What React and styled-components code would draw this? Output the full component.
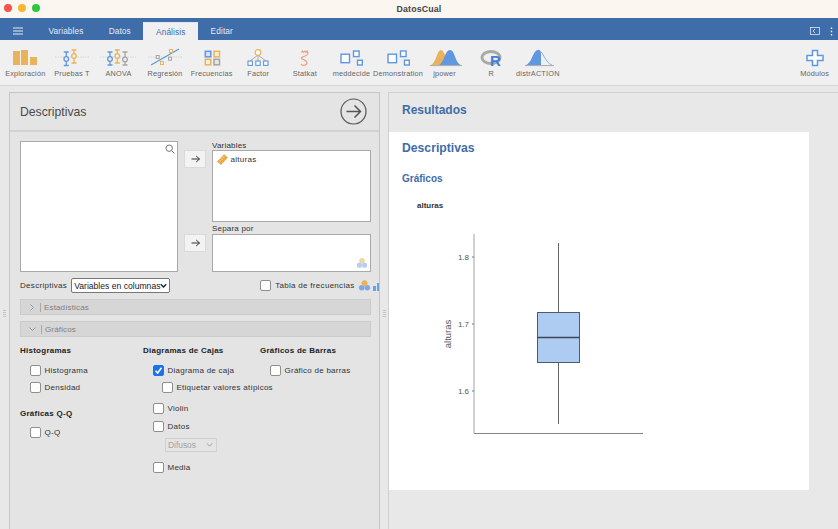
import React from 'react';
import styled, { createGlobalStyle } from 'styled-components';

const Global = createGlobalStyle`
    html, body { margin: 0; padding: 0; height: 100%; overflow: hidden; }
    body { font-family: "Liberation Sans", Arial, sans-serif; background: #e8e8e8; }
    #root { height: 100%; }
`;

const BLUE = '#5f97e0';
const ORANGE = '#e9b35c';
const GREY = '#a5a5a5';

const Page = styled.div`
    width: 838px;
    height: 529px;
    display: flex;
    flex-direction: column;
    overflow: hidden;
`;

const TitleBar = styled.div`
    height: 18px;
    flex: none;
    background: #fbf6f0;
    position: relative;
    display: flex;
    align-items: center;
    justify-content: center;
    font-size: 8.8px;
    font-weight: bold;
    letter-spacing: 0.15px;
    color: #444;
`;

const Lights = styled.div`
    position: absolute;
    left: 4px;
    top: 4px;
    display: flex;
    gap: 6px;
`;

const Light = styled.span`
    width: 8px;
    height: 8px;
    border-radius: 50%;
    background: ${props => props.$color};
`;

const NavBar = styled.div`
    height: 22px;
    flex: none;
    background: #3e6da9;
    display: flex;
    align-items: flex-end;
`;

const Burger = styled.div`
    width: 36px;
    height: 18px;
    display: flex;
    align-items: center;
    justify-content: center;
`;

const Tab = styled.div`
    height: 18px;
    padding: 0 12.6px;
    display: flex;
    align-items: center;
    font-size: 8.3px;
    letter-spacing: 0.1px;
    color: ${props => (props.$active ? '#3e6da9' : '#e4ebf5')};
    background: ${props => (props.$active ? '#f0f0f0' : 'transparent')};
    border-top: ${props => (props.$active ? '1px solid #dfe6ef' : '0')};
    box-sizing: border-box;
`;

const NavRight = styled.div`
    margin-left: auto;
    height: 18px;
    display: flex;
    align-items: center;
    gap: 10px;
    padding-right: 5px;
`;

const Ribbon = styled.div`
    height: 46px;
    flex: none;
    box-sizing: border-box;
    padding-left: 2px;
    background: #f0f0f0;
    border-bottom: 1px solid #d8d8d8;
    display: flex;
`;

const RibbonItem = styled.div`
    width: 46.6px;
    flex: none;
    display: flex;
    flex-direction: column;
    align-items: center;
    padding-top: 7px;
    margin-left: ${props => (props.$end ? 'auto' : '0')};
`;

const RibbonLabel = styled.div`
    margin-top: 1px;
    font-size: 7.3px;
    letter-spacing: 0.2px;
    line-height: 9px;
    color: #666;
    white-space: nowrap;
`;

const Main = styled.div`
    flex: 1;
    display: flex;
    padding-top: 6px;
    min-height: 0;
`;

const Gutter = styled.div`
    width: ${props => props.$width}px;
    flex: none;
    display: flex;
    flex-direction: column;
    align-items: center;
    justify-content: center;
    gap: 1px;
    padding-top: 6px;
    box-sizing: border-box;
`;

const GripDot = styled.span`
    width: 3px;
    height: 1px;
    background: #c4c4c4;
`;

const OptionsPanel = styled.div`
    width: 371px;
    flex: none;
    box-sizing: border-box;
    border: 1px solid #c6c6c6;
    border-bottom: 0;
    background: #e4e4e4;
    overflow: hidden;
`;

const PanelHeader = styled.div`
    height: 39px;
    box-sizing: border-box;
    padding: 0 12px 0 10px;
    border-bottom: 2px solid #d2d2d2;
    display: flex;
    align-items: center;
    justify-content: space-between;
`;

const PanelTitle = styled.div`
    font-size: 12.2px;
    color: #4a4a4a;
`;

const PanelBody = styled.div`
    padding: 9px 0 0 10px;
    width: 351px;
`;

const Supplier = styled.div`
    display: grid;
    grid-template-columns: 158px 22px 159px;
    grid-template-rows: 81px 48px;
    column-gap: 6px;
    row-gap: 2px;
`;

const VarSource = styled.div`
    grid-row: 1 / span 2;
    box-sizing: border-box;
    background: #fff;
    border: 1px solid #a9a9a9;
    position: relative;
`;

const SearchSpot = styled.div`
    position: absolute;
    top: 2px;
    right: 2px;
    line-height: 0;
`;

const MoveButton = styled.div`
    width: 22px;
    height: 18px;
    margin-top: ${props => props.$top}px;
    box-sizing: border-box;
    background: #f3f3f3;
    border: 1px solid #dadada;
    display: flex;
    align-items: center;
    justify-content: center;
`;

const TargetWrap = styled.div`
    display: flex;
    flex-direction: column;
`;

const TargetLabel = styled.div`
    font-size: 8px;
    letter-spacing: 0.2px;
    line-height: ${props => props.$line}px;
    height: ${props => props.$line}px;
    color: #333;
`;

const TargetBox = styled.div`
    flex: 1;
    box-sizing: border-box;
    background: #fff;
    border: 1px solid #a9a9a9;
    padding: 2px 3px;
    position: relative;
`;

const VarRow = styled.div`
    display: flex;
    align-items: center;
    gap: 1.5px;
    font-size: 8px;
    letter-spacing: 0.3px;
    color: #333;
`;

const TargetBadge = styled.div`
    position: absolute;
    right: 2px;
    bottom: 2px;
    line-height: 0;
`;

const OptionRow = styled.div`
    display: flex;
    align-items: center;
    height: 17px;
    margin-top: 5px;
    font-size: 8px;
    letter-spacing: 0.3px;
    color: #333;
    white-space: nowrap;
`;

const SelectShell = styled.div`
    position: relative;
    flex: none;
    line-height: 0;
    margin: ${props => props.$margin};
`;

const SelectChevron = styled.span`
    position: absolute;
    right: ${props => props.$right}px;
    top: 50%;
    transform: translateY(-50%);
    pointer-events: none;
`;

const NativeSelect = styled.select`
    appearance: none;
    font-family: "Liberation Sans", Arial, sans-serif;
    font-size: 8.6px;
    height: 15px;
    width: 99px;
    padding: 0 0 0 2px;
    background: #fff;
    color: #222;
    border: 1px solid #777;
    border-radius: 2px;
`;

const FreqGroup = styled.div`
    display: flex;
    align-items: center;
    gap: 4px;
    margin-left: 90px;
    flex: none;
`;

const FreqIcons = styled.div`
    display: flex;
    align-items: center;
    gap: 2px;
    margin-left: -1px;
`;

const Check = styled.div`
    width: 11px;
    height: 11px;
    flex: none;
    box-sizing: border-box;
    border-radius: 2px;
    background: ${props => (props.$on ? '#1a73e8' : '#fff')};
    border: 1px solid ${props => (props.$on ? '#1a73e8' : '#8f8f8f')};
    display: flex;
    align-items: center;
    justify-content: center;
`;

const Fold = styled.div`
    height: 16px;
    margin-top: ${props => props.$top}px;
    box-sizing: border-box;
    background: #d6d6d6;
    border: 1px solid #cbcbcb;
    display: flex;
    align-items: center;
    padding-left: 8px;
    font-size: 8px;
    letter-spacing: 0.15px;
    color: #808080;
`;

const FoldBar = styled.span`
    width: 1px;
    height: 9px;
    background: #a8a8a8;
    margin: 0 3px 0 5px;
`;

const OptionsGrid = styled.div`
    margin-top: 9px;
    display: grid;
    grid-template-columns: 123px 117px 1fr;
`;

const OptionColumn = styled.div`
    display: flex;
    flex-direction: column;
    align-items: flex-start;
`;

const GroupTitle = styled.div`
    font-size: 8px;
    font-weight: bold;
    letter-spacing: 0.25px;
    line-height: 10px;
    margin-top: ${props => props.$top || 0}px;
    margin-bottom: ${props => props.$bottom}px;
    color: #222;
    white-space: nowrap;
`;

const CheckRow = styled.div`
    display: flex;
    align-items: center;
    gap: 3.5px;
    height: 11px;
    margin-left: ${props => props.$indent}px;
    margin-top: ${props => props.$top || 0}px;
    font-size: 8px;
    letter-spacing: 0.25px;
    color: #333;
    white-space: nowrap;
`;

const MutedSelect = styled.select`
    appearance: none;
    font-family: "Liberation Sans", Arial, sans-serif;
    font-size: 8.4px;
    width: 52px;
    height: 14px;
    padding: 0 0 0 2px;
    background: #e4e4e4;
    color: #a3a3a3;
    border: 1px solid #cfcfcf;
    border-radius: 1px;
    opacity: 1;
`;

const ResultsPane = styled.div`
    flex: 1;
    min-width: 0;
    border-left: 1px solid #cfcfcf;
    border-top: 1px solid #cfcfcf;
    display: flex;
    flex-direction: column;
    align-items: flex-start;
`;

const ResultsHeader = styled.div`
    height: 39px;
    flex: none;
    box-sizing: border-box;
    padding: 0 0 6px 13px;
    display: flex;
    align-items: center;
    font-size: 12px;
    font-weight: bold;
    color: #3e6da9;
`;

const Sheet = styled.div`
    width: 420px;
    height: 358px;
    flex: none;
    box-sizing: border-box;
    background: #fff;
    padding: 9px 0 0 13px;
`;

const ResultTitle = styled.div`
    font-size: 12.2px;
    font-weight: bold;
    line-height: 14px;
    color: #3e6da9;
`;

const ResultSub = styled.div`
    margin-top: 18px;
    font-size: 10px;
    font-weight: bold;
    line-height: 12px;
    color: #3e6da9;
`;

const PlotTitle = styled.div`
    margin: 16px 0 0 15px;
    font-size: 8px;
    font-weight: bold;
    line-height: 10px;
    color: #333;
`;

const PlotSvg = styled.svg`
    display: block;
    margin: 14px 0 0 33px;
`;

function Whisker({ x, top, bottom, dot, color }) {
    return (
        <g stroke={color} fill="none" strokeWidth="1.3">
            <path d={`M${x - 2.5} ${top}h5M${x - 2.5} ${bottom}h5M${x} ${top}V${bottom}`} />
            <circle cx={x} cy={dot} r="2.3" fill="#f0f0f0" />
        </g>
    );
}

function Dashed({ from = 6, to = 40 }) {
    return <path d={`M${from} 10H${to}`} stroke="#cfcfcf" strokeWidth="0.8" strokeDasharray="1.5 1" />;
}

function Sq({ x, y, s, color, w = 1.4 }) {
    return <rect x={x} y={y} width={s} height={s} fill="#fff" stroke={color} strokeWidth={w} />;
}

const ribbonIcons = {
    exploracion: (
        <g fill={ORANGE}>
            <rect x="11" y="4" width="7" height="14" />
            <rect x="19" y="3" width="7" height="15" />
            <rect x="28" y="10" width="7" height="8" />
        </g>
    ),
    pruebas: (
        <g>
            <Dashed />
            <Whisker x={17.3} top={5} bottom={18.5} dot={12} color={BLUE} />
            <Whisker x={25} top={3} bottom={16} dot={9} color={ORANGE} />
        </g>
    ),
    anova: (
        <g>
            <Dashed from={5} to={41} />
            <Whisker x={15} top={5} bottom={18} dot={12} color={BLUE} />
            <Whisker x={22.3} top={3} bottom={16} dot={9} color={ORANGE} />
            <Whisker x={30} top={5} bottom={18} dot={12.5} color={GREY} />
        </g>
    ),
    regresion: (
        <g>
            <Dashed from={6} to={40} />
            <path d="M9 18L37 2" stroke={BLUE} strokeWidth="1.2" />
            <rect x="14.2" y="8.5" width="3" height="3" fill="#f0f0f0" stroke={GREY} />
            <rect x="27.5" y="2.5" width="3" height="3" fill="#f0f0f0" stroke={ORANGE} />
            <rect x="26.5" y="10.2" width="3" height="3" fill="#f0f0f0" stroke={GREY} />
            <rect x="18.5" y="14.5" width="3" height="3" fill="#f0f0f0" stroke={ORANGE} />
        </g>
    ),
    frecuencias: (
        <g>
            <rect x="16.3" y="4.3" width="5.5" height="5.5" fill="#d6e4f7" stroke={BLUE} strokeWidth="1.5" />
            <rect x="25" y="4.3" width="5.5" height="5.5" fill="#fbeed8" stroke={ORANGE} strokeWidth="1.5" />
            <rect x="16.3" y="12.3" width="5.5" height="5.5" fill="#fbeed8" stroke={ORANGE} strokeWidth="1.5" />
            <rect x="25" y="12.3" width="5.5" height="5.5" fill="#e6e6e6" stroke={GREY} strokeWidth="1.5" />
        </g>
    ),
    factor: (
        <g>
            <path d="M23 8L15 14M23 8V14M23 8L31 14" stroke="#9a9a9a" strokeWidth="0.8" />
            <circle cx="23" cy="5.5" r="2.8" fill="#fff" stroke={ORANGE} strokeWidth="1.2" />
            <Sq x={13} y={14} s={4.4} color={BLUE} w={1.1} />
            <Sq x={20.8} y={14} s={4.4} color={BLUE} w={1.1} />
            <Sq x={28.6} y={14} s={4.4} color={BLUE} w={1.1} />
        </g>
    ),
    statkat: (
        <path
            d="M19.5 5.5l1-1.5 1 1.5 1.5-1.5 1 1.5 1-1.5 1 2.5c-.5 2.5-5 2.5-6.5 4.2-1.3 1.6 5.5 2 5.5 5 0 3-5 3.4-6 1.3"
            fill="none"
            stroke="#ee9a7f"
            strokeWidth="1.1"
        />
    ),
    squares: (
        <g>
            <Sq x={13} y={7.2} s={8.5} color={BLUE} />
            <Sq x={25.5} y={4} s={5.6} color={BLUE} />
            <Sq x={29.5} y={13.2} s={4.8} color={BLUE} />
        </g>
    ),
    jpower: (
        <g>
            <path d="M9 18C14 16 15 3 19 3S24 15 29 18Z" fill={ORANGE} />
            <path d="M17 18C22 16 23 3 28 3S33 16 39 18Z" fill={BLUE} />
            <path d="M8 18.6H40" stroke="#a9a9a9" strokeWidth="1" />
        </g>
    ),
    r: (
        <g>
            <ellipse cx="23" cy="10.5" rx="9" ry="6" fill="none" stroke="#a9a9a9" strokeWidth="2.8" />
            <text x="27.5" y="19" textAnchor="middle" fontFamily="Liberation Sans" fontWeight="bold" fontSize="15" fill="#3f7fdd">R</text>
        </g>
    ),
    distr: (
        <g>
            <path d="M11 18C17 16 18 3 23 3C24.5 3 25.5 4 26 6V18Z" fill={BLUE} />
            <path d="M23 3C28 3 30 16 37 18" fill="none" stroke={BLUE} strokeWidth="0.7" />
            <path d="M10 18.6H39" stroke="#a9a9a9" strokeWidth="1" />
        </g>
    ),
    modulos: (
        <path
            d="M20.5 3.5h5v5h5.5v5h-5.5v5h-5v-5H15v-5h5.5z"
            fill="#fff"
            stroke={BLUE}
            strokeWidth="1.5"
        />
    ),
};

const ribbon = [
    ['Exploración', 'exploracion'],
    ['Pruebas T', 'pruebas'],
    ['ANOVA', 'anova'],
    ['Regresión', 'regresion'],
    ['Frecuencias', 'frecuencias'],
    ['Factor', 'factor'],
    ['Statkat', 'statkat'],
    ['meddecide', 'squares'],
    ['Demonstration', 'squares'],
    ['jpower', 'jpower'],
    ['R', 'r'],
    ['distrACTION', 'distr'],
];

function RibbonButton({ label, icon, end }) {
    return (
        <RibbonItem $end={end}>
            <svg width="46" height="21" viewBox="0 0 46 21">{ribbonIcons[icon]}</svg>
            <RibbonLabel>{label}</RibbonLabel>
        </RibbonItem>
    );
}

function Grip({ width }) {
    return (
        <Gutter $width={width}>
            <GripDot />
            <GripDot />
            <GripDot />
            <GripDot />
        </Gutter>
    );
}

function Arrow() {
    return (
        <svg width="9" height="8" viewBox="0 0 9 8">
            <path d="M0.5 4H8.5M5.2 1L8.5 4L5.2 7" fill="none" stroke="#333" strokeWidth="1" />
        </svg>
    );
}

function Chevron({ color, width }) {
    return (
        <svg width="7" height="5" viewBox="0 0 7 5" style={{ display: 'block' }}>
            <path d="M0.8 0.8L3.5 3.6L6.2 0.8" fill="none" stroke={color} strokeWidth={width} />
        </svg>
    );
}

function Nominal({ size = 14, faded }) {
    return (
        <svg width={size} height={size} viewBox="0 0 14 14" opacity={faded ? 0.55 : 1}>
            <circle cx="4" cy="9.5" r="3" fill="#7fa8e6" />
            <circle cx="10" cy="9.5" r="3" fill="#7fa8e6" />
            <circle cx="7" cy="4.5" r="3.2" fill="#e9b35c" />
        </svg>
    );
}

function Option({ label, on, indent, top }) {
    return (
        <CheckRow $indent={indent} $top={top}>
            <Check $on={on}>
                {on && (
                    <svg width="9" height="9" viewBox="0 0 9 9">
                        <path d="M1.5 4.8L3.6 7L7.5 1.8" fill="none" stroke="#fff" strokeWidth="1.6" />
                    </svg>
                )}
            </Check>
            {label}
        </CheckRow>
    );
}

export default function App() {
    return (
        <Page>
            <Global />
            <TitleBar>
                <Lights>
                    <Light $color="#f5544d" />
                    <Light $color="#f7b52e" />
                    <Light $color="#2ec840" />
                </Lights>
                DatosCual
            </TitleBar>
            <NavBar>
                <Burger>
                    <svg width="10" height="8" viewBox="0 0 10 8">
                        <path d="M0 1H10M0 4H10M0 7H10" stroke="#e8eef7" strokeWidth="1" />
                    </svg>
                </Burger>
                <Tab>Variables</Tab>
                <Tab>Datos</Tab>
                <Tab $active>Análisis</Tab>
                <Tab>Editar</Tab>
                <NavRight>
                    <svg width="10" height="8" viewBox="0 0 10 8">
                        <rect x="0.5" y="0.5" width="9" height="7" fill="none" stroke="#dbe4f0" strokeWidth="0.8" />
                        <path d="M5 2L3 4L5 6" fill="none" stroke="#e8eef7" strokeWidth="0.8" />
                    </svg>
                    <svg width="3" height="9" viewBox="0 0 3 9">
                        <path d="M1.5 0.5v1.5M1.5 3.7v1.5M1.5 7v1.5" stroke="#f2f5fa" strokeWidth="1.4" />
                    </svg>
                </NavRight>
            </NavBar>
            <Ribbon>
                {ribbon.map(([label, icon]) => (
                    <RibbonButton key={label} label={label} icon={icon} />
                ))}
                <RibbonButton label="Módulos" icon="modulos" end />
            </Ribbon>
            <Main>
                <Grip width={9} />
                <OptionsPanel>
                    <PanelHeader>
                        <PanelTitle>Descriptivas</PanelTitle>
                        <svg width="27" height="27" viewBox="0 0 27 27">
                            <circle cx="13.5" cy="13.5" r="12.5" fill="none" stroke="#555" strokeWidth="1.2" />
                            <path d="M6.5 13.5H20M14.5 7.5L20.5 13.5L14.5 19.5" fill="none" stroke="#555" strokeWidth="1.5" />
                        </svg>
                    </PanelHeader>
                    <PanelBody>
                        <Supplier>
                            <VarSource>
                                <SearchSpot>
                                    <svg width="10" height="10" viewBox="0 0 10 10">
                                        <circle cx="4.2" cy="4.2" r="3.2" fill="none" stroke="#666" strokeWidth="0.9" />
                                        <path d="M6.6 6.6L9.4 9.4" stroke="#666" strokeWidth="1" />
                                    </svg>
                                </SearchSpot>
                            </VarSource>
                            <MoveButton $top={9}><Arrow /></MoveButton>
                            <TargetWrap>
                                <TargetLabel $line={9}>Variables</TargetLabel>
                                <TargetBox>
                                    <VarRow>
                                        <svg width="13" height="13" viewBox="0 0 13 13">
                                            <path d="M8 1.2L12 4.6L5 12L1 8.4Z" fill="#e9a94b" />
                                            <path d="M6.6 3.4L8 4.8M5 5.2L6.4 6.6M3.4 7L4.8 8.4" stroke="#fff" strokeWidth="0.6" />
                                        </svg>
                                        alturas
                                    </VarRow>
                                </TargetBox>
                            </TargetWrap>
                            <MoveButton $top={10}><Arrow /></MoveButton>
                            <TargetWrap>
                                <TargetLabel $line={10}>Separa por</TargetLabel>
                                <TargetBox>
                                    <TargetBadge><Nominal size={12} faded /></TargetBadge>
                                </TargetBox>
                            </TargetWrap>
                        </Supplier>
                        <OptionRow>
                            Descriptivas
                            <SelectShell $margin="0 0 0 4px">
                                <NativeSelect defaultValue="col">
                                    <option value="col">Variables en columnas</option>
                                </NativeSelect>
                                <SelectChevron $right={3}><Chevron color="#222" width="1.4" /></SelectChevron>
                            </SelectShell>
                            <FreqGroup>
                                <Check />
                                Tabla de frecuencias
                                <FreqIcons>
                                    <Nominal size={13} />
                                    <svg width="10" height="10" viewBox="0 0 10 10">
                                        <path d="M0 5h3v5H0zM4 2h3v8H4z" fill="#6d9fe6" />
                                    </svg>
                                </FreqIcons>
                            </FreqGroup>
                        </OptionRow>
                        <Fold $top={5}>
                            <svg width="6" height="7" viewBox="0 0 6 7">
                                <path d="M1.5 0.5L4.5 3.5L1.5 6.5" fill="none" stroke="#8a8a8a" strokeWidth="0.8" />
                            </svg>
                            <FoldBar />
                            Estadísticas
                        </Fold>
                        <Fold $top={6}>
                            <svg width="7" height="6" viewBox="0 0 7 6">
                                <path d="M0.5 1.5L3.5 4.5L6.5 1.5" fill="none" stroke="#8a8a8a" strokeWidth="0.8" />
                            </svg>
                            <FoldBar />
                            Gráficos
                        </Fold>
                        <OptionsGrid>
                            <OptionColumn>
                                <GroupTitle $bottom={9}>Histogramas</GroupTitle>
                                <Option label="Histograma" indent={10} />
                                <Option label="Densidad" indent={10} top={6} />
                                <GroupTitle $top={16} $bottom={8}>Gráficas Q-Q</GroupTitle>
                                <Option label="Q-Q" indent={10} />
                            </OptionColumn>
                            <OptionColumn>
                                <GroupTitle $bottom={9}>Diagramas de Cajas</GroupTitle>
                                <Option label="Diagrama de caja" on indent={10} />
                                <Option label="Etiquetar valores atípicos" indent={19} top={6} />
                                <Option label="Violin" indent={10} top={10} />
                                <Option label="Datos" indent={10} top={7} />
                                <SelectShell $margin="6px 0 0 22px">
                                    <MutedSelect disabled defaultValue="d">
                                        <option value="d">Difusos</option>
                                    </MutedSelect>
                                    <SelectChevron $right={4}><Chevron color="#a3a3a3" width="1" /></SelectChevron>
                                </SelectShell>
                                <Option label="Media" indent={10} top={10} />
                            </OptionColumn>
                            <OptionColumn>
                                <GroupTitle $bottom={9}>Gráficos de Barras</GroupTitle>
                                <Option label="Gráfico de barras" indent={10} />
                            </OptionColumn>
                        </OptionsGrid>
                    </PanelBody>
                </OptionsPanel>
                <Grip width={8} />
                <ResultsPane>
                    <ResultsHeader>Resultados</ResultsHeader>
                    <Sheet>
                        <ResultTitle>Descriptivas</ResultTitle>
                        <ResultSub>Gráficos</ResultSub>
                        <PlotTitle>alturas</PlotTitle>
                        <PlotSvg width="215" height="225" viewBox="435 225 215 225">
                            <g fontFamily="Liberation Sans" fontSize="8" fill="#555" textAnchor="end">
                                <text x="469" y="260">1.8</text>
                                <text x="469" y="327">1.7</text>
                                <text x="469" y="394">1.6</text>
                            </g>
                            <text
                                transform="translate(451 334) rotate(-90)"
                                fontFamily="Liberation Sans"
                                fontSize="9.5"
                                fill="#555"
                                textAnchor="middle"
                            >
                                alturas
                            </text>
                            <path d="M474 234V433" fill="none" stroke="#a2a2a2" strokeWidth="1" />
                            <path d="M474 433.5H643" fill="none" stroke="#848484" strokeWidth="1" />
                            <path d="M472 257H474M472 324H474M472 391H474" stroke="#777" strokeWidth="1" />
                            <path d="M558.5 243V312M558.5 362V424" stroke="#666" strokeWidth="1" />
                            <rect x="537.5" y="312.5" width="42" height="50" fill="#aecbf2" stroke="#4e5a6e" strokeWidth="1" />
                            <path d="M537.5 337.5H579.5" stroke="#3d4656" strokeWidth="1.4" />
                        </PlotSvg>
                    </Sheet>
                </ResultsPane>
            </Main>
        </Page>
    );
}
